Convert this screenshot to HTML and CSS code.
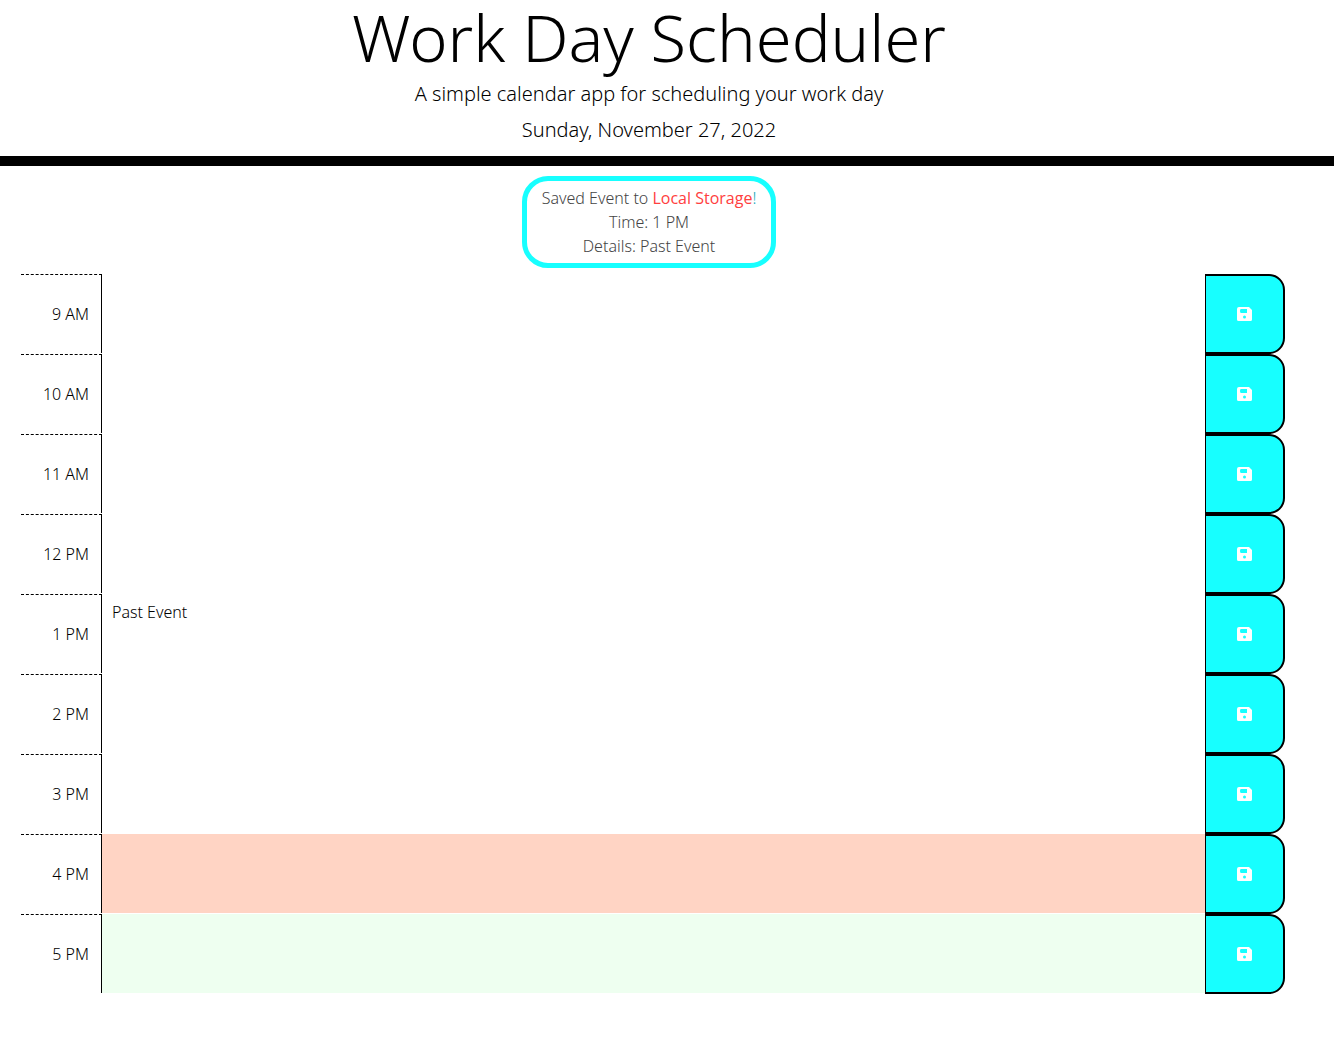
FILE: index.html
```html
<!DOCTYPE html>
<html lang="en">
<head>
<meta charset="utf-8">
<meta name="viewport" content="width=device-width, initial-scale=1">
<title>Work Day Scheduler</title>
<link rel="stylesheet" href="styles.css">
</head>
<body>
<svg class="sprite" aria-hidden="true">
  <symbol id="save" viewBox="0 0 15 14">
    <path fill-rule="evenodd" d="M2 0H12L15 3V12.500Q15 14 13.500 14H1.500Q0 14 0 12.500V2Q0 0 2 0ZM4 2Q3 2 3 4T4 6H10V2ZM7.500 8.500A1.500 1.500 0 1 0 7.500 11.500A1.500 1.500 0 1 0 7.500 8.500Z"/>
  </symbol>
</svg>
<header class="masthead">
  <h1 class="title">Work Day Scheduler</h1>
  <p class="lead">A simple calendar app for scheduling your work day</p>
  <p class="lead">Sunday, November 27, 2022</p>
</header>
<div class="notice-row">
  <div class="notice" role="status">
    <p>Saved Event to <span class="storage">Local Storage</span><span class="mark">!</span></p>
    <p>Time: 1 PM</p>
    <p>Details: Past Event</p>
  </div>
</div>
<main class="schedule">
  <div class="row past"><label class="hour" for="h9">9 AM</label><textarea class="event" id="h9"></textarea><button class="save" type="button" aria-label="Save 9 AM"><svg class="icon"><use href="#save"/></svg></button></div>
  <div class="row past"><label class="hour" for="h10">10 AM</label><textarea class="event" id="h10"></textarea><button class="save" type="button" aria-label="Save 10 AM"><svg class="icon"><use href="#save"/></svg></button></div>
  <div class="row past"><label class="hour" for="h11">11 AM</label><textarea class="event" id="h11"></textarea><button class="save" type="button" aria-label="Save 11 AM"><svg class="icon"><use href="#save"/></svg></button></div>
  <div class="row past"><label class="hour" for="h12">12 PM</label><textarea class="event" id="h12"></textarea><button class="save" type="button" aria-label="Save 12 PM"><svg class="icon"><use href="#save"/></svg></button></div>
  <div class="row past"><label class="hour" for="h13">1 PM</label><textarea class="event" id="h13">Past Event</textarea><button class="save" type="button" aria-label="Save 1 PM"><svg class="icon"><use href="#save"/></svg></button></div>
  <div class="row past"><label class="hour" for="h14">2 PM</label><textarea class="event" id="h14"></textarea><button class="save" type="button" aria-label="Save 2 PM"><svg class="icon"><use href="#save"/></svg></button></div>
  <div class="row past"><label class="hour" for="h15">3 PM</label><textarea class="event" id="h15"></textarea><button class="save" type="button" aria-label="Save 3 PM"><svg class="icon"><use href="#save"/></svg></button></div>
  <div class="row present"><label class="hour" for="h16">4 PM</label><textarea class="event" id="h16"></textarea><button class="save" type="button" aria-label="Save 4 PM"><svg class="icon"><use href="#save"/></svg></button></div>
  <div class="row future"><label class="hour" for="h17">5 PM</label><textarea class="event" id="h17"></textarea><button class="save" type="button" aria-label="Save 5 PM"><svg class="icon"><use href="#save"/></svg></button></div>
</main>
</body>
</html>
```
FILE: styles.css
```css
* { box-sizing: border-box; }

body {
  margin: 0;
  background: #fff;
  color: #000;
  font: 300 16px/24px "Noto Sans", "Open Sans", sans-serif;
}

h1, p { margin: 0; }

.sprite { position: absolute; width: 0; height: 0; }

.masthead {
  padding: 0 36px 8px 0;
  border-bottom: 10px solid #000;
  text-align: center;
}

.title { margin-bottom: 2px; font-size: 65px; font-weight: 300; line-height: 74px; }

.lead { font-size: 20px; line-height: 36px; }

.notice-row {
  display: flex;
  justify-content: center;
  padding: 10px 36px 6px 0;
}

.notice {
  padding: 5px 15px;
  border: 5px solid #17ffff;
  border-radius: 26px;
  color: #444;
  text-align: center;
}

.storage { color: #ff4040; font-family: "Open Sans", sans-serif; font-weight: 400; }
.mark { color: #2ab; }

.schedule { padding: 0 49px 70px 21px; }

.row {
  display: grid;
  grid-template-columns: 81px 1fr 80px;
  height: 80px;
}

.hour {
  height: 79px;
  padding: 27px 12px 0 0;
  border-top: 1px dashed #000;
  border-right: 1px solid #000;
  text-align: right;
}

.event {
  height: 79px;
  width: 100%;
  padding: 6px 10px;
  border: 0;
  outline: 0;
  resize: none;
  background: #fff;
  color: #000;
  font: inherit;
}

.present .event { background: #ffd4c4; }
.future .event { background: #eefff0; }

.save {
  display: flex;
  align-items: center;
  justify-content: center;
  padding: 0;
  border: 2px solid #000;
  border-left-width: 1px;
  border-radius: 0 16px 16px 0;
  background: #17ffff;
  color: #fff;
}

.icon { width: 15px; height: 14px; fill: currentColor; }
```
